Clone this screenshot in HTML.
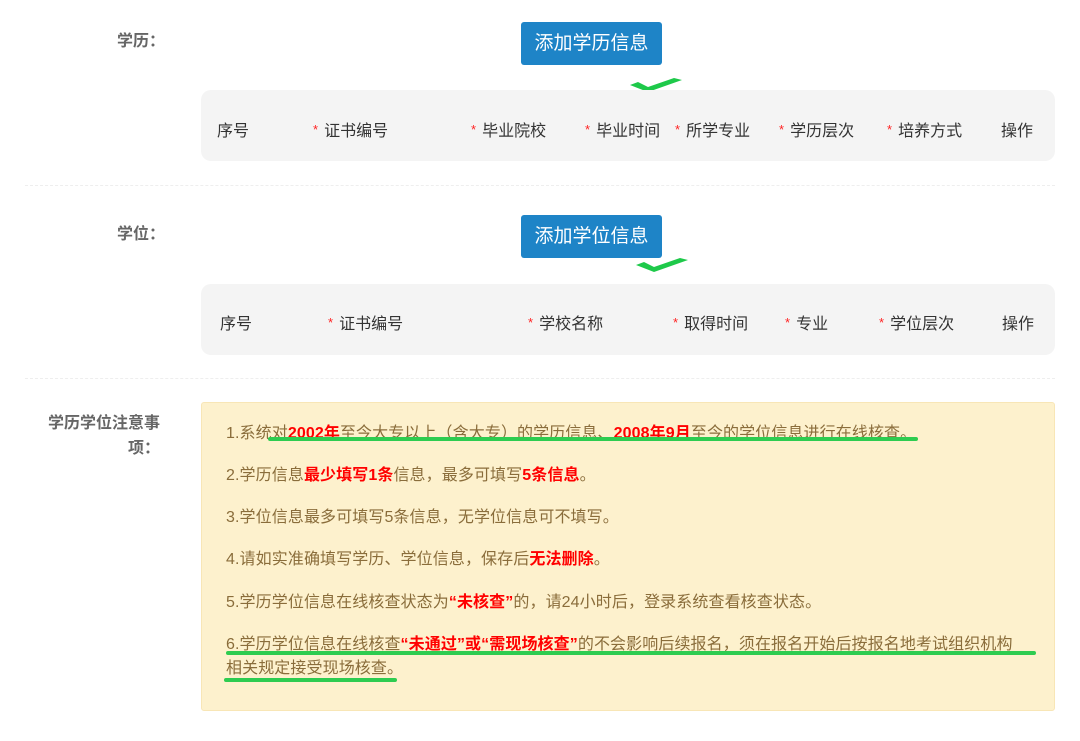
<!DOCTYPE html>
<html><head><meta charset="utf-8"><style>
*{margin:0;padding:0;box-sizing:border-box}
body{width:1080px;height:741px;background:#fff;position:relative;overflow:hidden;font-family:"Liberation Sans","Noto Sans CJK SC",sans-serif;}
.a{position:absolute;white-space:nowrap}
.lbl{font-size:16px;font-weight:bold;color:#666}
.btn{background:#1e84c7;color:#fff;font-size:19px;border-radius:3px;text-align:center;line-height:43px;width:141px;height:43px}
.tbl{background:#f4f4f4;border-radius:10px;left:201px;width:854px;height:71px}
.th{font-size:16px;color:#333}
.th i{color:#f22;font-style:normal;font-size:13px;margin-right:6px;position:relative;top:-2px}
.sep{left:25px;width:1030px;border-top:1px dashed #eee;height:0}
.box{left:201px;top:402px;width:854px;height:309px;background:#fdf1cd;border:1px solid #f8e6b6;border-radius:3px}
.n{font-size:16px;color:#8a6d3b;left:226px;letter-spacing:0.1px}
.n b{color:#f00}
.g{background:#2ecc50;height:4px;border-radius:2px}
</style></head><body>
<div class="a lbl" style="left:117px;top:27px">学历：</div>
<div class="a btn" style="left:521px;top:22px">添加学历信息</div>
<svg class="a" style="left:628px;top:77px" width="56" height="18"><path d="M2 8 L20 15 L54 3 L46 1 L20 10 L10 5Z" fill="#1ec94a"/></svg>
<div class="a tbl" style="top:90px"></div>
<div class="a th" style="left:217px;top:117px">序号</div>
<div class="a th" style="left:313px;top:117px"><i>*</i>证书编号</div>
<div class="a th" style="left:471px;top:117px"><i>*</i>毕业院校</div>
<div class="a th" style="left:585px;top:117px"><i>*</i>毕业时间</div>
<div class="a th" style="left:675px;top:117px"><i>*</i>所学专业</div>
<div class="a th" style="left:779px;top:117px"><i>*</i>学历层次</div>
<div class="a th" style="left:887px;top:117px"><i>*</i>培养方式</div>
<div class="a th" style="left:1001px;top:117px">操作</div>
<div class="a sep" style="top:185px"></div>

<div class="a lbl" style="left:117px;top:220px">学位：</div>
<div class="a btn" style="left:521px;top:215px">添加学位信息</div>
<svg class="a" style="left:634px;top:257px" width="56" height="18"><path d="M2 8 L20 15 L54 3 L46 1 L20 10 L10 5Z" fill="#1ec94a"/></svg>
<div class="a tbl" style="top:284px"></div>
<div class="a th" style="left:220px;top:310px">序号</div>
<div class="a th" style="left:328px;top:310px"><i>*</i>证书编号</div>
<div class="a th" style="left:528px;top:310px"><i>*</i>学校名称</div>
<div class="a th" style="left:673px;top:310px"><i>*</i>取得时间</div>
<div class="a th" style="left:785px;top:310px"><i>*</i>专业</div>
<div class="a th" style="left:879px;top:310px"><i>*</i>学位层次</div>
<div class="a th" style="left:1002px;top:310px">操作</div>
<div class="a sep" style="top:378px"></div>

<div class="a lbl" style="left:48px;top:411px;text-align:right;width:112px;white-space:normal;line-height:25px">学历学位注意事项：</div>
<div class="a box"></div>
<div class="a n" style="top:419px">1.系统对<b>2002年</b>至今大专以上（含大专）的学历信息、<b>2008年9月</b>至今的学位信息进行在线核查。</div>
<div class="a g" style="left:268px;top:437px;width:650px"></div>
<div class="a n" style="top:461px">2.学历信息<b>最少填写1条</b>信息，最多可填写<b>5条信息</b>。</div>
<div class="a n" style="top:503px">3.学位信息最多可填写5条信息，无学位信息可不填写。</div>
<div class="a n" style="top:545px">4.请如实准确填写学历、学位信息，保存后<b>无法删除</b>。</div>
<div class="a n" style="top:588px">5.学历学位信息在线核查状态为<b>“未核查”</b>的，请24小时后，登录系统查看核查状态。</div>
<div class="a n" style="top:630px">6.学历学位信息在线核查<b>“未通过”或“需现场核查”</b>的不会影响后续报名，须在报名开始后按报名地考试组织机构</div>
<div class="a g" style="left:226px;top:651px;width:810px"></div>
<div class="a n" style="top:654px">相关规定接受现场核查。</div>
<div class="a g" style="left:224px;top:678px;width:173px"></div>
</body></html>
